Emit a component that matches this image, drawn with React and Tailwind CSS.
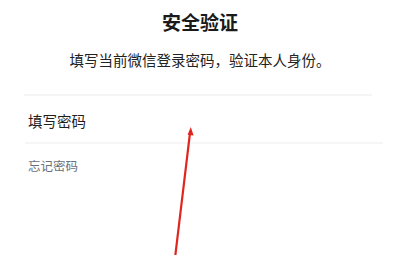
import React from "react";

export default function App() {
  return (
    <div
      className="relative w-[400px] h-[255px] bg-white overflow-hidden"
      style={{ fontFamily: '"Noto Sans CJK SC", "Noto Sans", sans-serif' }}
    >
      <h1 className="pt-[10px] text-[19px] leading-[24px] font-bold text-center text-[#1a1a1a]">
        安全验证
      </h1>
      <p className="mt-[16px] text-[14.5px] leading-[20px] text-center text-[#222]">
        填写当前微信登录密码，验证本人身份。
      </p>
      <div className="mt-[24px] ml-[24px] mr-[28px] h-[2px] bg-[#f5f5f5]" />
      <div className="mt-[14px] pl-[28px] text-[14.5px] leading-[22px] text-[#1e1e1e]">
        填写密码
      </div>
      <div className="mt-[10px] ml-[25px] mr-[17px] h-[2px] bg-[#f6f6f6]" />
      <div className="mt-[13px] pl-[28px] text-[12.5px] leading-[18px] text-[#687180]">
        忘记密码
      </div>
      <svg
        className="absolute left-0 top-0"
        width="400"
        height="255"
        viewBox="0 0 400 255"
      >
        <line
          x1="175"
          y1="258"
          x2="190"
          y2="133"
          stroke="#e0261f"
          strokeWidth="2.2"
          strokeLinecap="round"
        />
        <polygon points="190.8,127 193.6,135.5 187.6,134.8" fill="#e0261f" />
      </svg>
    </div>
  );
}
